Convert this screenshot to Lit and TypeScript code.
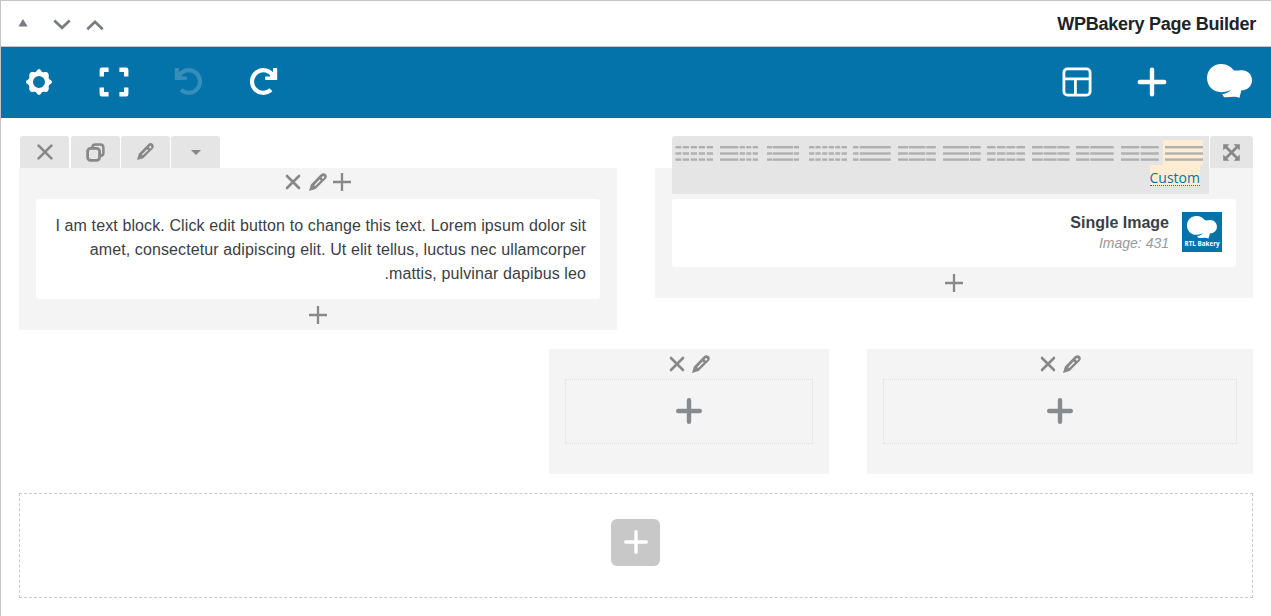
import { LitElement, html, svg, css } from "lit";
import { customElement, property } from "lit/decorators.js";

const chef = svg`
  <path d="M14.2 0C20.5 0 24.3 3 27 6.4 29.5 7 31.6 6.2 34.9 6.2 40.6 6.2 45 10.5 45 16.2 45 22 40.4 26.3 34.4 26.3L32.4 34C27.5 31.6 22 33.6 17.6 33.2 15.8 32.5 16.8 31.2 14.8 30.2 18.6 30 22 28.6 24.4 25.6 21.5 27.4 18 28.2 14.2 28.2 6 28.2 0 22 0 14.1S6 0 14.2 0Z"/>
`;

const pencil = svg`
  <path fill-rule="evenodd" d="M0 18 1.9 11.4 12.1 1.1C13.5-.2 15.3-.2 16.7 1.1 18.2 2.6 18.2 4.4 16.9 5.7L6.6 16.1ZM5.2 12.2 6.2 13.1 11.7 7.6 10.6 6.6ZM13.3 3.7A1 1 0 1 0 14.7 5 1 1 0 1 0 13.3 3.7Z"/>
`;

const redo = svg`
  <path d="M21 21.8A11.3 11.3 0 1 1 23.3 8.2" fill="none" stroke="currentColor" stroke-width="4.2"/>
  <path d="M27.2 .8V12H16A.9.9 0 0 1 15.1 11.1V8.4H20L23 6V.8A.7.7 0 0 1 23.7.1H26.5A.7.7 0 0 1 27.2.8Z"/>
`;

const icons: Record<string, { w: number; h: number; body: unknown }> = {
  triangle: { w: 10, h: 8, body: svg`<path d="M5 0 9.6 7.6H.4Z"/>` },
  down: { w: 18, h: 12, body: svg`<path d="M1.3 1.6 9 8.8 16.7 1.6" fill="none" stroke="currentColor" stroke-width="2.7"/>` },
  up: { w: 18, h: 12, body: svg`<path d="M1.3 10.2 9 2.8 16.7 10.2" fill="none" stroke="currentColor" stroke-width="2.7"/>` },
  gear: {
    w: 26, h: 26,
    body: svg`<path fill-rule="evenodd" d="M13 0C14.8 0 15.4 3.1 17 3.2 18.6 3.3 20.6 2.4 21.9 4 23.4 5.5 22.5 7.4 22.7 9 22.9 10.6 26 11.2 26 13S22.9 15.4 22.7 17C22.5 18.6 23.4 20.5 21.9 22 20.6 23.6 18.6 22.7 17 22.8 15.4 22.9 14.8 26 13 26S10.6 22.9 9 22.8C7.4 22.7 5.4 23.6 4.1 22 2.6 20.5 3.5 18.6 3.3 17 3.1 15.4 0 14.8 0 13S3.1 10.6 3.3 9C3.5 7.4 2.6 5.5 4.1 4 5.4 2.4 7.4 3.3 9 3.2 10.6 3.1 11.2 0 13 0ZM13 7A6 6 0 1 0 13 19 6 6 0 1 0 13 7Z"/>`,
  },
  full: {
    w: 30, h: 30,
    body: svg`<path d="M2.8 9.5V2.7H9.6M20.4 2.7H27.2V9.5M27.2 20.5V27.3H20.4M9.6 27.3H2.8V20.5" fill="none" stroke="currentColor" stroke-width="4.4" stroke-linejoin="round"/>`,
  },
  redo: { w: 28, h: 28, body: redo },
  undo: { w: 28, h: 28, body: svg`<g transform="translate(28 0) scale(-1 1)">${redo}</g>` },
  layout: {
    w: 30, h: 30,
    body: svg`<rect x="1.9" y="1.9" width="26.2" height="26.2" rx="3.6" fill="none" stroke="currentColor" stroke-width="2.8"/><path d="M2 11.8H28M13.4 12V28" fill="none" stroke="currentColor" stroke-width="2.8"/>`,
  },
  plusWhite: { w: 30, h: 30, body: svg`<path d="M15 2.8V27.2M2.8 15H27.2" stroke="currentColor" stroke-width="4.4" stroke-linecap="round"/>` },
  logo: { w: 46, h: 35, body: chef },
  close: { w: 16, h: 16, body: svg`<path d="M1.6 1.6 14.4 14.4M14.4 1.6 1.6 14.4" stroke="currentColor" stroke-width="2.6" stroke-linecap="round"/>` },
  closeSmall: { w: 16, h: 16, body: svg`<path d="M2 2 14 14M14 2 2 14" stroke="currentColor" stroke-width="2.6" stroke-linecap="round"/>` },
  copy: {
    w: 19, h: 19,
    body: svg`<rect x="1.6" y="5.3" width="12" height="12" rx="3" fill="none" stroke="currentColor" stroke-width="2.8"/><path d="M6.2 4.6C6.4 2.5 7.4 1.5 9.4 1.5H14.2C16.4 1.5 17.4 2.5 17.4 4.7V9.6C17.4 11.8 16.4 12.9 14.4 13" fill="none" stroke="currentColor" stroke-width="2.5"/>`,
  },
  pencil: { w: 18, h: 18, body: pencil },
  caret: { w: 10, h: 5, body: svg`<path d="M0 0H10L5 5Z"/>` },
  plus: { w: 18, h: 18, body: svg`<path d="M9 0V18M0 9H18" stroke="currentColor" stroke-width="2.3"/>` },
  plusBig: { w: 26, h: 26, body: svg`<path d="M13 2.2V23.8M2.2 13H23.8" stroke="currentColor" stroke-width="4.4" stroke-linecap="round"/>` },
  plusAdd: { w: 24, h: 24, body: svg`<path d="M12 1.7V22.3M1.7 12H22.3" stroke="currentColor" stroke-width="3.4" stroke-linecap="round"/>` },
  expand: {
    w: 17, h: 17,
    body: svg`<path d="M3 3 14 14M14 3 3 14" stroke="currentColor" stroke-width="2.7"/><path d="M.2.2H6.4L.2 6.4ZM16.8.2V6.4L10.6.2ZM16.8 16.8H10.6L16.8 10.6ZM.2 16.8V10.6L6.4 16.8Z"/>`,
  },
};

@customElement("ui-icon")
class UiIcon extends LitElement {
  static styles = css`
    :host { display: block; flex: none; }
    .glyph { display: block; fill: currentColor; }
  `;
  @property() name = "";
  @property({ type: Number }) size = 0;
  render() {
    const i = icons[this.name];
    if (!i) return null;
    const w = this.size || i.w;
    return html`<svg class="glyph" width=${w} height=${(w * i.h) / i.w} viewBox="0 0 ${i.w} ${i.h}">${i.body}</svg>`;
  }
}

/* Each layout preset: cell width followed by [start, end] spans of its dashes. */
const layouts: { width: number; spans: number[][] }[] = [
  { width: 45, spans: [[3.5, 9.3], [10.7, 17], [18.7, 25], [26.7, 33], [34.7, 41]] },
  { width: 45, spans: [[3, 21.3], [22.7, 28], [29.3, 34.3], [35.7, 41]] },
  { width: 44, spans: [[5, 10.3], [10.9, 31.2], [32, 37]] },
  { width: 44, spans: [[3, 8.3], [9.4, 14.7], [16.2, 21.2], [22.6, 28], [29.2, 34.2], [35.6, 41]] },
  { width: 45, spans: [[3, 8.5], [9.8, 40.8]] },
  { width: 45, spans: [[3, 13.2], [14, 30.3], [31.2, 40.8]] },
  { width: 44, spans: [[3, 29], [30, 40.7]] },
  { width: 45, spans: [[3, 11.6], [13, 21.4], [22.4, 31.3], [32.4, 41]] },
  { width: 44, spans: [[3, 13.8], [14.6, 27.6], [28.4, 40.6]] },
  { width: 45, spans: [[3, 16.3], [17.3, 40.7]] },
  { width: 45, spans: [[3, 21.2], [22.6, 40.8]] },
  { width: 40, spans: [[2, 40]] },
];

@customElement("app-root")
class AppRoot extends LitElement {
  static styles = css`
    :host {
      display: block;
      box-sizing: border-box;
      height: 616px;
      overflow: hidden;
      border: solid #c3c4c7;
      border-width: 1px 0 0 1px;
      background: #fff;
      color: #3a3f45;
      font: 16px/24px "Liberation Sans", Arial, sans-serif;
    }
    .titlebar {
      display: flex;
      align-items: center;
      height: 45px;
      padding: 0 15px 0 17px;
      border-bottom: 1px solid #c3c4c7;
      color: #787c82;
    }
    .toggle { margin: 0 25px 2px 0; }
    .move { margin: 2px 14.5px 0 0; }
    .title {
      margin: 0 0 0 auto;
      color: #1d2327;
      font-size: 18px;
      font-weight: bold;
      letter-spacing: -0.25px;
    }
    .toolbar {
      display: flex;
      align-items: center;
      box-sizing: border-box;
      height: 71px;
      padding: 0 0 2px;
      background: #0473aa;
      color: #fff;
    }
    .tool { display: grid; place-items: center; width: 75px; }
    .tool.muted { color: #368fbb; }
    .tool.undo { width: 73px; }
    .tool.redo { box-sizing: border-box; width: 79px; padding-top: 1px; }
    .tool.brand { box-sizing: border-box; width: 82px; }
    .spacer { flex: 1; }
    .content { padding: 18px 18px 0; }
    .controls {
      display: flex;
      align-items: flex-start;
      height: 32px;
      padding-left: 1px;
      color: #888;
    }
    .tab {
      display: grid;
      place-items: center;
      width: 49px;
      height: 32px;
      margin-right: 1px;
      border-radius: 3px 3px 0 0;
      background: #e5e5e5;
    }
    .tab.first { margin-right: 2px; }
    .tab.edit { box-sizing: border-box; padding-bottom: 2px; }
    .tab.expand { box-sizing: border-box; width: 43px; margin: 0 0 0 1px; padding-right: 1px; }
    .presets {
      position: relative;
      z-index: 1;
      box-sizing: border-box;
      width: 537px;
      height: 58px;
      margin-left: auto;
      padding-top: 4px;
      border-radius: 3px 0 0 0;
      background: #e5e5e5;
    }
    .cells { display: flex; height: 25px; }
    .cell { display: block; flex: none; fill: #b0b0b0; }
    .cell.active { background: #feedd2; }
    .custom-line { display: flex; justify-content: flex-end; padding-right: 9px; }
    .custom {
      height: 20px;
      border-bottom: 1px dotted #0473aa;
      background: #feedd2;
      color: #0473aa;
      font: 14px/26px "Open Sans", sans-serif;
    }
    .row { display: flex; align-items: flex-start; gap: 38px; }
    .row.second { justify-content: flex-end; margin-top: 19px; }
    .column {
      display: flex;
      flex-direction: column;
      box-sizing: border-box;
      flex: none;
      padding: 0 17px;
      background: #f4f4f4;
    }
    .half { width: 598px; }
    .narrow { width: 280px; height: 125px; padding: 0 16px; }
    .wide { width: 386px; height: 125px; padding: 0 16px; }
    .col-controls {
      display: flex;
      justify-content: center;
      align-items: center;
      gap: 7px;
      height: 31px;
      padding-bottom: 3px;
      box-sizing: border-box;
      color: #888;
    }
    .col-controls .second-gap { margin-left: 1px; margin-right: -1px; }
    .narrow .col-controls, .wide .col-controls { height: 30px; padding: 0 0 0 1px; }
    .col-controls.empty { visibility: hidden; }
    .card { box-sizing: border-box; border-radius: 3px; background: #fff; }
    .text {
      margin: 0;
      padding: 15px 14px 13px;
      height: 100px;
      direction: rtl;
      letter-spacing: 0.11px;
    }
    .image {
      display: flex;
      justify-content: flex-end;
      gap: 13px;
      height: 68px;
      padding: 13px 14px;
      text-align: right;
    }
    .name { font-weight: bold; line-height: 22px; }
    .detail { font-size: 14px; font-style: italic; line-height: 19px; color: #999; }
    .thumb { display: block; width: 40px; height: 40px; background: #0473aa; fill: #fff; }
    .thumb-label { font: bold 6.4px "Open Sans", sans-serif; }
    .append { display: grid; place-items: center; height: 31px; color: #888; }
    .drop {
      display: grid;
      place-items: center;
      box-sizing: border-box;
      height: 65px;
      padding-bottom: 1px;
      border: 1px dotted #dedede;
      color: #868b90;
    }
    .add-area {
      display: grid;
      place-items: center;
      box-sizing: border-box;
      height: 105px;
      margin-top: 19px;
      padding: 0 2px 6px 0;
      border: 1px dashed #c9c9c9;
    }
    .add {
      display: grid;
      place-items: center;
      box-sizing: border-box;
      width: 49px;
      height: 47px;
      padding: 0 0 1px 1px;
      border-radius: 6px;
      background: #c8c8c8;
      color: #fff;
    }
  `;

  preset(p: { width: number; spans: number[][] }, i: number) {
    const rows = [6, 12.3, 18.4];
    return html`<svg class="cell ${i === layouts.length - 1 ? "active" : ""}" width=${p.width} height="25">
      ${rows.map((y) => p.spans.map(([a, b]) => svg`<rect x=${a} y=${y} width=${b - a} height="2.4"/>`))}
    </svg>`;
  }

  emptyColumn(size: string) {
    return html`<section class="column ${size}">
      <div class="col-controls">
        <ui-icon name="closeSmall"></ui-icon>
        <ui-icon name="pencil"></ui-icon>
      </div>
      <div class="drop"><ui-icon name="plusBig"></ui-icon></div>
    </section>`;
  }

  render() {
    return html`
      <header class="titlebar">
        <ui-icon class="toggle" name="triangle"></ui-icon>
        <ui-icon class="move" name="down"></ui-icon>
        <ui-icon class="move" name="up"></ui-icon>
        <h2 class="title">WPBakery Page Builder</h2>
      </header>
      <nav class="toolbar">
        <span class="tool"><ui-icon name="gear"></ui-icon></span>
        <span class="tool"><ui-icon name="full"></ui-icon></span>
        <span class="tool undo muted"><ui-icon name="undo"></ui-icon></span>
        <span class="tool redo"><ui-icon name="redo"></ui-icon></span>
        <span class="spacer"></span>
        <span class="tool"><ui-icon name="layout"></ui-icon></span>
        <span class="tool"><ui-icon name="plusWhite"></ui-icon></span>
        <span class="tool brand"><ui-icon name="logo"></ui-icon></span>
      </nav>
      <main class="content">
        <div class="controls">
          <span class="tab first"><ui-icon name="close"></ui-icon></span>
          <span class="tab"><ui-icon name="copy"></ui-icon></span>
          <span class="tab edit"><ui-icon name="pencil" size="17"></ui-icon></span>
          <span class="tab"><ui-icon name="caret"></ui-icon></span>
          <div class="presets">
            <div class="cells">${layouts.map((p, i) => this.preset(p, i))}</div>
            <div class="custom-line"><a class="custom">Custom</a></div>
          </div>
          <span class="tab expand"><ui-icon name="expand"></ui-icon></span>
        </div>
        <div class="row">
          <section class="column half">
            <div class="col-controls">
              <ui-icon name="closeSmall"></ui-icon>
              <ui-icon class="second-gap" name="pencil"></ui-icon>
              <ui-icon name="plus"></ui-icon>
            </div>
            <p class="card text">I am text block. Click edit button to change this text. Lorem ipsum dolor sit amet, consectetur adipiscing elit. Ut elit tellus, luctus nec ullamcorper mattis, pulvinar dapibus leo.</p>
            <div class="append"><ui-icon name="plus"></ui-icon></div>
          </section>
          <section class="column half">
            <div class="col-controls empty"></div>
            <div class="card image">
              <div>
                <div class="name">Single Image</div>
                <div class="detail">Image: 431</div>
              </div>
              <svg class="thumb" viewBox="0 0 40 40">
                <g transform="translate(5 4) scale(.665)">${chef}</g>
                <text class="thumb-label" x="2.6" y="33.9" textLength="35" lengthAdjust="spacingAndGlyphs">RTL Bakery</text>
              </svg>
            </div>
            <div class="append"><ui-icon name="plus"></ui-icon></div>
          </section>
        </div>
        <div class="row second">
          ${this.emptyColumn("narrow")}
          ${this.emptyColumn("wide")}
        </div>
        <div class="add-area"><span class="add"><ui-icon name="plusAdd"></ui-icon></span></div>
      </main>
    `;
  }
}
